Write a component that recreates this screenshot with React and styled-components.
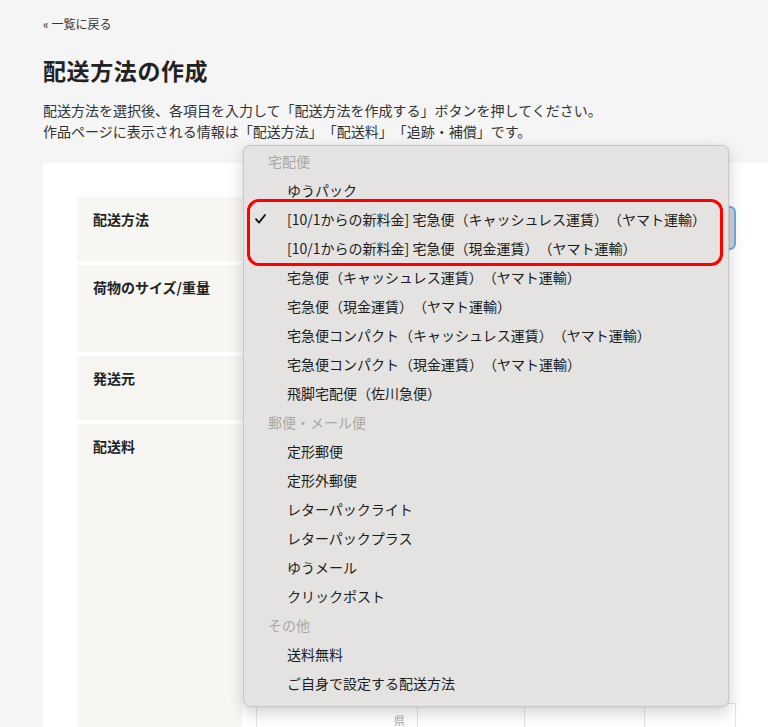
import React from "react";
import styled, { createGlobalStyle } from "styled-components";

const Global = createGlobalStyle`
  html, body { margin: 0; padding: 0; }
  body {
    background: #f5f5f5;
    font-family: "Noto Sans CJK JP", "Noto Sans", sans-serif;
    color: #222;
    overflow: hidden;
    text-spacing-trim: space-all;
  }
`;

const Page = styled.div`
  position: relative;
  height: 727px;
  overflow: hidden;
  padding: 14px 0 0 43px;
  box-sizing: border-box;
`;

const BackLink = styled.a`
  display: block;
  font-size: 12px;
  line-height: 20px;
  color: #333;
  text-decoration: none;
`;

const Title = styled.h1`
  margin: 20px 0 0;
  font-size: 23px;
  line-height: 32px;
  font-weight: 700;
  color: #222;
  letter-spacing: 0.6px;
`;

const Desc = styled.p`
  margin: 14px 0 0;
  font-size: 14px;
  line-height: 21px;
  color: #333;
`;

const Card = styled.div`
  margin-top: 21px;
  background: #fff;
  padding: 34px 0 0 34px;
  height: 600px;
`;

const FormGrid = styled.div`
  display: grid;
  grid-template-columns: 165px 1fr;
  row-gap: 4px;
`;

const Label = styled.div`
  background: #f7f6f3;
  padding: 12px 16px;
  font-size: 14px;
  font-weight: 700;
  line-height: 20px;
  height: ${(p) => p.$h}px;
  box-sizing: border-box;
`;

const Value = styled.div`
  padding: 9px 32px 0 14px;
  box-sizing: border-box;
`;

const SelectBox = styled.div`
  height: 44px;
  border: 2px solid #6fa6ee;
  border-radius: 6px;
  background: #d2d2d2;
  box-sizing: border-box;
`;

const PrefTable = styled.div`
  margin-top: 270px;
  display: grid;
  grid-template-columns: 161px 107px 120px 1fr;
  border-left: 1px solid #e4e4e4;
  border-top: 1px solid #e4e4e4;
`;

const PrefCell = styled.div`
  height: 30px;
  border-right: 1px solid #e4e4e4;
  border-bottom: 1px solid #e4e4e4;
  font-size: 11px;
  color: #aaa;
  text-align: right;
  padding: 8px 12px 0 0;
  box-sizing: border-box;
`;

const Menu = styled.div`
  position: absolute;
  left: 243px;
  top: 145px;
  width: 486px;
  box-sizing: border-box;
  background: #e4e3e1;
  border: 1px solid #c9c8c6;
  border-radius: 7px;
  box-shadow: 0 6px 16px rgba(0, 0, 0, 0.18), 0 0 2px rgba(0, 0, 0, 0.08);
  padding: 0 0 9px;
`;

const Row = styled.div`
  position: relative;
  height: 29px;
  display: flex;
  align-items: center;
  font-size: 14px;
  white-space: nowrap;
  padding-left: ${(p) => (p.$header ? 24 : 43)}px;
  color: ${(p) => (p.$header ? "#a9a8a6" : "#1c1c1c")};
`;

const Check = styled.svg`
  position: absolute;
  left: 11px;
  top: 10px;
`;

const Highlight = styled.div`
  position: absolute;
  left: 3px;
  top: 53px;
  width: 476px;
  height: 67px;
  box-sizing: border-box;
  border: 3px solid #ff0000;
  border-radius: 12px;
  pointer-events: none;
`;

const groups = [
  {
    header: "宅配便",
    items: [
      "ゆうパック",
      "[10/1からの新料金] 宅急便（キャッシュレス運賃）（ヤマト運輸）",
      "[10/1からの新料金] 宅急便（現金運賃）（ヤマト運輸）",
      "宅急便（キャッシュレス運賃）（ヤマト運輸）",
      "宅急便（現金運賃）（ヤマト運輸）",
      "宅急便コンパクト（キャッシュレス運賃）（ヤマト運輸）",
      "宅急便コンパクト（現金運賃）（ヤマト運輸）",
      "飛脚宅配便（佐川急便）",
    ],
  },
  {
    header: "郵便・メール便",
    items: ["定形郵便", "定形外郵便", "レターパックライト", "レターパックプラス", "ゆうメール", "クリックポスト"],
  },
  {
    header: "その他",
    items: ["送料無料", "ご自身で設定する配送方法"],
  },
];

const selected = "[10/1からの新料金] 宅急便（キャッシュレス運賃）（ヤマト運輸）";

export default function App() {
  return (
    <>
      <Global />
      <Page>
        <BackLink href="#">« 一覧に戻る</BackLink>
        <Title>配送方法の作成</Title>
        <Desc>
          配送方法を選択後、各項目を入力して「配送方法を作成する」ボタンを押してください。
          <br />
          作品ページに表示される情報は「配送方法」「配送料」「追跡・補償」です。
        </Desc>
        <Card>
          <FormGrid>
            <Label $h={64}>配送方法</Label>
            <Value>
              <SelectBox />
            </Value>
            <Label $h={87}>荷物のサイズ/重量</Label>
            <Value />
            <Label $h={64}>発送元</Label>
            <Value />
            <Label $h={400}>配送料</Label>
            <Value>
              <PrefTable>
                <PrefCell>県</PrefCell>
                <PrefCell />
                <PrefCell />
                <PrefCell />
              </PrefTable>
            </Value>
          </FormGrid>
        </Card>
        <Menu>
          {groups.map((g) => (
            <React.Fragment key={g.header}>
              <Row $header>{g.header}</Row>
              {g.items.map((it) => (
                <Row key={it}>
                  {it === selected && (
                    <Check width="11" height="10" viewBox="0 0 11 10">
                      <path d="M1 5.2 L4 8.6 L10 1" fill="none" stroke="#111" strokeWidth="1.8" strokeLinecap="round" strokeLinejoin="round" />
                    </Check>
                  )}
                  {it}
                </Row>
              ))}
            </React.Fragment>
          ))}
          <Highlight />
        </Menu>
      </Page>
    </>
  );
}
